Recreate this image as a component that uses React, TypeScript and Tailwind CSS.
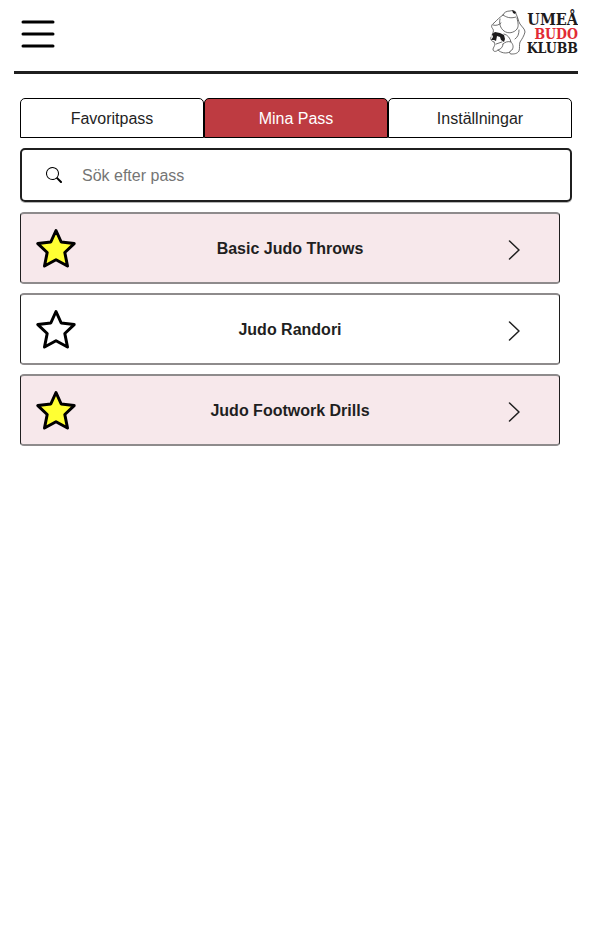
import { useState } from "react";

const sessions = [
  { name: "Basic Judo Throws", favorite: true },
  { name: "Judo Randori", favorite: false },
  { name: "Judo Footwork Drills", favorite: true },
];

const tabs = ["Favoritpass", "Mina Pass", "Inställningar"];

function Logo() {
  return (
    <svg viewBox="0 0 90 54" className="h-[54px] w-[90px]" role="img" aria-label="Umeå Budo Klubb">
      <g fill="none" stroke="#4a4a4a" strokeWidth="0.8" strokeLinecap="round" strokeLinejoin="round">
        <path d="M15 9C16 6 19 5 22 5C25 4 28 5 28 8C30 11 30 15 32 18C34 21 37 23 37 26C36 30 34 33 32 36C31 39 32 42 31 45C29 48 26 48 23 48C20 47 22 45 24 44C26 41 25 38 23 36" />
        <path d="M15 9C12 11 9 14 6 17C3 19 3 21 5 23C6 25 5 27 4 29M15 9C18 11 22 13 28 11" />
        <path d="M12 13C11 17 12 22 16 25C20 28 26 27 29 23C31 20 30 17 29 12M13 17C11 19 8 20 5 19" />
        <path d="M16 28C20 29 22 32 23 36C20 35 17 36 15 38M31 24C31 28 30 31 27 33" />
        <path d="M6 36C8 39 6 40 5 43C5 46 8 46 10 44C13 43 15 41 15 38M10 44C13 47 18 48 22 46M8 38C10 37 12 37 14 36M3 31C2 33 3 35 6 36" />
      </g>
      <path d="M4 28L7 26L12 27L16 29L17 33L16 36L13 34L12 31L9 30L8 35L6 34L3 34L5 31Z" fill="#1d1b1c" />
      <path d="M24 4L28 6L27 8L25 7Z" fill="#1d1b1c" />
      <g fontFamily="'DejaVu Serif Condensed', 'DejaVu Serif', serif" fontWeight="700" textAnchor="end">
        <text x="90" y="19" fontSize="16" fill="#1d1b1c">UMEÅ</text>
        <text x="90" y="33" fontSize="14" fill="#e22b35">BUDO</text>
        <text x="90" y="47" fontSize="14" fill="#1d1b1c">KLUBB</text>
      </g>
    </svg>
  );
}

export default function App() {
  const [active, setActive] = useState(1);
  return (
    <div className="px-[14px] font-['Liberation_Sans',Arial,sans-serif] text-base text-[#1f1f1f]">
      <header className="flex h-[74px] items-start justify-between border-b-3 border-[#1f1f1f]">
        <button aria-label="Meny" className="mt-[14px] ml-1">
          <svg viewBox="0 0 40 40" className="size-10" stroke="#000" strokeWidth="3" strokeLinecap="round">
            <path d="M5 8H35M5 20H35M5 32H35" />
          </svg>
        </button>
        <a href="#hem" className="mt-[6px]">
          <Logo />
        </a>
      </header>
      <main className="px-[6px] pt-6">
        <nav className="flex h-10">
          {tabs.map((tab, i) => (
            <button
              key={tab}
              onClick={() => setActive(i)}
              className={`flex-1 rounded-t-[5px] border border-black pt-0.5 ${i === active ? "bg-[#be3b41] text-white" : "bg-white"}`}
            >
              {tab}
            </button>
          ))}
        </nav>
        <label className="mt-[10px] flex h-[54px] items-center rounded-[5px] border-2 border-[#1f1f1f] pl-6 shadow-[0_1px_0_#b5b5b5]">
          <svg viewBox="0 0 16 16" className="size-4" fill="#000" aria-hidden="true">
            <path d="M11.742 10.344a6.5 6.5 0 1 0-1.397 1.398h-.001q.044.06.098.115l3.85 3.85a1 1 0 0 0 1.415-1.414l-3.85-3.85a1 1 0 0 0-.115-.1zM12 6.5a5.5 5.5 0 1 1-11 0 5.5 5.5 0 0 1 11 0" />
          </svg>
          <input
            type="text"
            aria-label="Sök efter pass"
            placeholder="Sök efter pass"
            className="ml-5 min-w-0 flex-1 pt-0.5 outline-none placeholder:text-[#757575]"
          />
        </label>
        <ul className="mt-[10px] mr-3 flex flex-col gap-[9px]">
          {sessions.map((s) => (
            <li
              key={s.name}
              className={`flex h-[72px] items-center justify-between rounded-[4px] border-x border-y-2 border-x-[#1f1f1f] border-y-[#8e8b8c] pr-[34px] pl-[14px] ${s.favorite ? "bg-[#f7e8eb]" : "bg-white"}`}
            >
              <button aria-label="Favorit" aria-pressed={s.favorite}>
                <svg viewBox="0 0 40 40" className="size-10 overflow-visible" fill={s.favorite ? "#ffff33" : "#fff"} stroke="#000" strokeWidth="3" strokeLinejoin="round">
                  <path d="M21 2.500L26.200 14L39.200 15.600L29.800 24.500L32.500 38L21 31.800L9.500 38L12.200 24.500L2.800 15.600L15.800 14Z" />
                </svg>
              </button>
              <h2 className="pt-0.5 font-bold">{s.name}</h2>
              <button aria-label="Öppna">
                <svg viewBox="0 0 20 20" className="size-5 overflow-visible" fill="none" stroke="#1f1f1f" strokeWidth="1.500" strokeLinecap="round" strokeLinejoin="round">
                  <path d="M4.500 3L14 12L4.500 21" />
                </svg>
              </button>
            </li>
          ))}
        </ul>
      </main>
    </div>
  );
}
